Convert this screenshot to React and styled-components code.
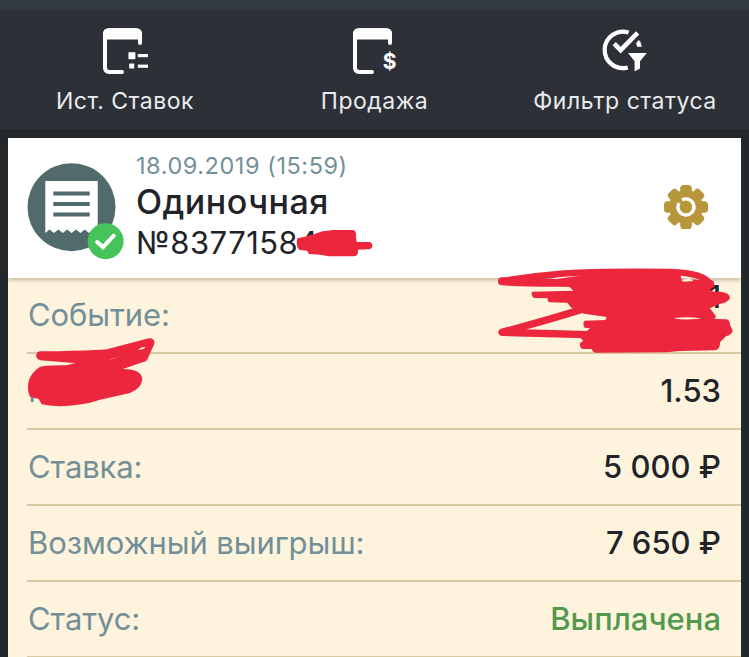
import React from 'react';

import styled, { createGlobalStyle } from 'styled-components';

const INK = '#ec263c';
const SLATE = '#738f98';
const SAND = '#fef4dd';
const GOLD = '#b8963c';

const GlobalStyle = createGlobalStyle`
  body {
    background: #23282c;
    font-family: Inter, "Liberation Sans", sans-serif;
    margin: 0;
    overflow: hidden;
  }
`;

const Page = styled.div`
  background: #23282c;
  box-sizing: border-box;
  height: 657px;
  overflow: hidden;
  position: relative;
  width: 749px;
`;

const StatusStrip = styled.div`
  background: #313a42;
  height: 10px;
`;

const Toolbar = styled.nav`
  background: #2d3037;
  display: grid;
  grid-template-columns: 248px 1fr 250px;
  height: 119px;
`;

const ToolbarItem = styled.a`
  align-items: center;
  color: #e9ebee;
  display: flex;
  flex-direction: column;
  padding-top: 17px;
`;

const ToolbarLabel = styled.span`
  font-size: 23px;
  letter-spacing: 0.5px;
  line-height: 28px;
  margin-top: 12px;
  padding-left: 2px;
  white-space: nowrap;
`;

const Card = styled.main`
  background: ${SAND};
  margin: 9px 8px 0;
`;

const CardHeader = styled.header`
  background: #fff;
  box-shadow: 0 2px 4px rgba(80, 60, 20, 0.32);
  box-sizing: border-box;
  display: flex;
  height: 140px;
  padding: 13px 32px 0 19px;
  position: relative;
`;

const HeaderText = styled.div`
  display: flex;
  flex: 1 0 auto;
  flex-direction: column;
  margin-left: 12px;
`;

const DateText = styled.time`
  color: ${SLATE};
  font-size: 23.5px;
  letter-spacing: 0.55px;
  line-height: 30px;
`;

const Title = styled.h1`
  color: #212329;
  font-size: 34px;
  font-weight: 500;
  letter-spacing: 0.5px;
  line-height: 42px;
  margin: 0;
`;

const TicketNumber = styled.span`
  color: #212329;
  font-size: 31px;
  letter-spacing: 0.45px;
  line-height: 40px;
`;

const ReceiptIcon = styled.svg`
  flex: none;
  margin-top: 11px;
`;

const SettingsIcon = styled.svg`
  flex: none;
  margin-top: 33px;
`;

const Row = styled.div`
  align-items: center;
  border-bottom: 2px solid #d9c9a3;
  box-sizing: border-box;
  display: flex;
  height: 76px;
  justify-content: space-between;
  margin-left: 19px;
  padding: 0 20px 0 1px;
`;

const RowLabel = styled.span`
  color: ${SLATE};
  font-size: 31px;
  letter-spacing: -0.1px;
  line-height: 38px;
  white-space: nowrap;
`;

const RowValue = styled.span`
  align-self: ${({ $top }) => ($top ? 'flex-start' : 'center')};
  color: ${({ $paid }) => ($paid ? '#53994d' : '#212329')};
  font-size: 31px;
  font-weight: 500;
  line-height: 38px;
  white-space: nowrap;
`;

const InkLayer = styled.svg`
  left: 0;
  pointer-events: none;
  position: absolute;
  top: 0;
`;

const WindowFrame = () => (
  <>
    <path d="M23 45H10.5Q6 45 6 40.5V7.3Q6 3.2 10.5 3.2H36.5Q41 3.2 41 7.3V16" fill="none" stroke="#fff" strokeWidth="4" strokeLinecap="round" />
    <path d="M4 12.5V7.2Q4 1.2 10 1.2H37Q43 1.2 43 7.2V12.5Z" fill="#fff" />
  </>
);

const HistoryIcon = () => (
  <svg width="50" height="48" viewBox="0 0 50 48">
    <WindowFrame />
    <rect x="29.4" y="25.2" width="7" height="7" rx=".6" fill="#fff" />
    <rect x="30.2" y="36.4" width="5" height="5.2" rx=".6" fill="#fff" />
    <rect x="38.8" y="27" width="10.2" height="3.2" fill="#fff" />
    <rect x="38.8" y="37.6" width="10.2" height="3.2" fill="#fff" />
  </svg>
);

const SaleIcon = () => (
  <svg width="50" height="48" viewBox="0 0 50 48">
    <WindowFrame />
    <text x="40.6" y="42.2" textAnchor="middle" fontSize="21" fontWeight="700" fill="#fff">$</text>
  </svg>
);

const FilterIcon = () => (
  <svg width="50" height="48" viewBox="599 27 50 48">
    <path d="M628.6 32.6A18.2 18.2 0 1 0 627.8 67.4" fill="none" stroke="#fff" strokeWidth="4.2" />
    <path d="M614.2 43.6L620.6 50.2L637.6 32.8" fill="none" stroke="#fff" strokeWidth="4.6" />
    <path d="M638.6 40L640.2 41.6L642 46.8H637L636.2 43Z" fill="#fff" />
    <path d="M628 53H646.8L640 61.2V68.6L634.6 71.2V61.2Z" fill="#fff" />
  </svg>
);

const rows = [
  { label: 'Событие:', value: '1', top: true },
  { label: 'К', value: '1.53' },
  { label: 'Ставка:', value: '5 000 ₽' },
  { label: 'Возможный выигрыш:', value: '7 650 ₽' },
  { label: 'Статус:', value: 'Выплачена', paid: true },
];

const App = () => (
  <Page>
    <GlobalStyle />
    <StatusStrip />
    <Toolbar>
      <ToolbarItem>
        <HistoryIcon />
        <ToolbarLabel>Ист. Ставок</ToolbarLabel>
      </ToolbarItem>
      <ToolbarItem>
        <SaleIcon />
        <ToolbarLabel>Продажа</ToolbarLabel>
      </ToolbarItem>
      <ToolbarItem>
        <FilterIcon />
        <ToolbarLabel>Фильтр статуса</ToolbarLabel>
      </ToolbarItem>
    </Toolbar>
    <Card>
      <CardHeader>
        <ReceiptIcon width="97" height="98" viewBox="27 162 97 98">
          <circle cx="71.5" cy="207.2" r="44" fill="#516a6b" />
          <path d="M45.3 181H97.7V233L93.4 229.5L89 233L84.8 229.5L80.4 233L76 229.5L71.6 233L67.2 229.5L62.8 233L58.4 229.5L54 233L49.6 229.5L45.3 233Z" fill="#fff" />
          <path d="M53.3 193.5H89.7M53.3 204H89.7M53.3 214.4H89.7" stroke="#516a6b" strokeWidth="4" />
          <circle cx="105.6" cy="241.2" r="18" fill="#46c35a" />
          <path d="M97.2 242L103 247.2L113.8 235.6" fill="none" stroke="#fff" strokeWidth="4" strokeLinecap="round" />
        </ReceiptIcon>
        <HeaderText>
          <DateText>18.09.2019 (15:59)</DateText>
          <Title>Одиночная</Title>
          <TicketNumber>№83771584</TicketNumber>
        </HeaderText>
        <SettingsIcon width="46" height="46" viewBox="-23 -23 46 46">
          <circle r="17" fill={GOLD} />
          {[0, 45, 90, 135, 180, 225, 270, 315].map((angle) => (
            <rect key={angle} x="-5.8" y="-22" width="11.6" height="14" rx="3.6" fill={GOLD} transform={`rotate(${angle})`} />
          ))}
          <path d="M-4 -7A8 8 0 1 1 -7 -4" fill="none" stroke="#fff" strokeWidth="3.4" />
        </SettingsIcon>
      </CardHeader>
      {rows.map(({ label, value, top, paid }) => (
        <Row key={label}>
          <RowLabel>{label}</RowLabel>
          <RowValue $top={top} $paid={paid}>{value}</RowValue>
        </Row>
      ))}
    </Card>
    {/* marker strokes over the private fields */}
    <InkLayer width="749" height="657" viewBox="0 0 749 657" fill={INK} stroke={INK} strokeLinejoin="round">
      <g transform="translate(120 140) scale(.33333)" strokeWidth="4">
        <path d="M533 297L562 291L582 285L608 276L640 272L700 272Q708 276 706 290L708 307L748 308Q756 310 755 318Q754 326 744 326L712 327Q714 346 702 347L628 347L600 342L568 340L562 330L540 328Q530 322 533 297Z" />
      </g>
      <g transform="translate(480 255) scale(.33333)">
        <path d="M66 78C130 68 180 62 250 56C330 50 470 50 570 51C640 53 680 66 690 88" fill="none" strokeWidth="20" strokeLinecap="round" />
        <path d="M66 79C150 84 210 83 290 84L600 84L690 88" fill="none" strokeWidth="24" strokeLinecap="round" />
        <path d="M265 92L230 72L260 60L600 58L606 76L640 84L700 78L704 94L690 104L702 110L720 110Q750 112 750 130Q744 144 716 148L690 160L708 184L704 192L740 193Q750 196 750 210L758 226Q758 238 738 244L720 262Q722 284 704 286L600 288L560 292L345 293Q336 290 336 282L308 282Q298 278 300 264L310 258L300 247L330 220L314 218Q306 206 314 197L376 195L380 186L312 176L274 158L262 143L208 142Q200 136 204 130L162 129Q152 122 156 110L280 107Z" stroke="none" />
        <path d="M300 165Q200 196 66 232L320 239" fill="none" strokeWidth="22" strokeLinecap="round" />
        <path d="M580 190Q622 184 662 190Q650 194 600 193Z" fill={SAND} stroke="none" />
        <path d="M604 74L630 70L640 78L610 80Z" fill={SAND} stroke="none" />
        <path d="M212 71Q250 64 300 62Q250 69 225 72Z" fill="#fff" stroke="none" />
      </g>
      <g transform="translate(0 270) scale(.33333)">
        <path d="M122 257C190 258 250 255 318 252L450 218L430 262L340 275Z" strokeWidth="27" strokeLinecap="round" />
        <path d="M300 252L450 218L436 262L330 285Z" stroke="none" />
        <path d="M118 292Q130 285 200 286L230 278L225 250L320 245L400 240L440 255Q450 270 430 276L368 297Q424 296 427 328Q424 356 390 369L300 389L270 398Q180 416 125 403L116 387L90 380Q80 360 86 334Q92 310 118 292Z" stroke="none" />
        <path d="M414 240L422 233L437 230L431 237Z" fill={SAND} stroke="none" />
        <path d="M322 272Q338 263 356 262Q338 268 322 272Z" fill="#f58a86" stroke="none" />
      </g>
    </InkLayer>
  </Page>
);

export default App;
